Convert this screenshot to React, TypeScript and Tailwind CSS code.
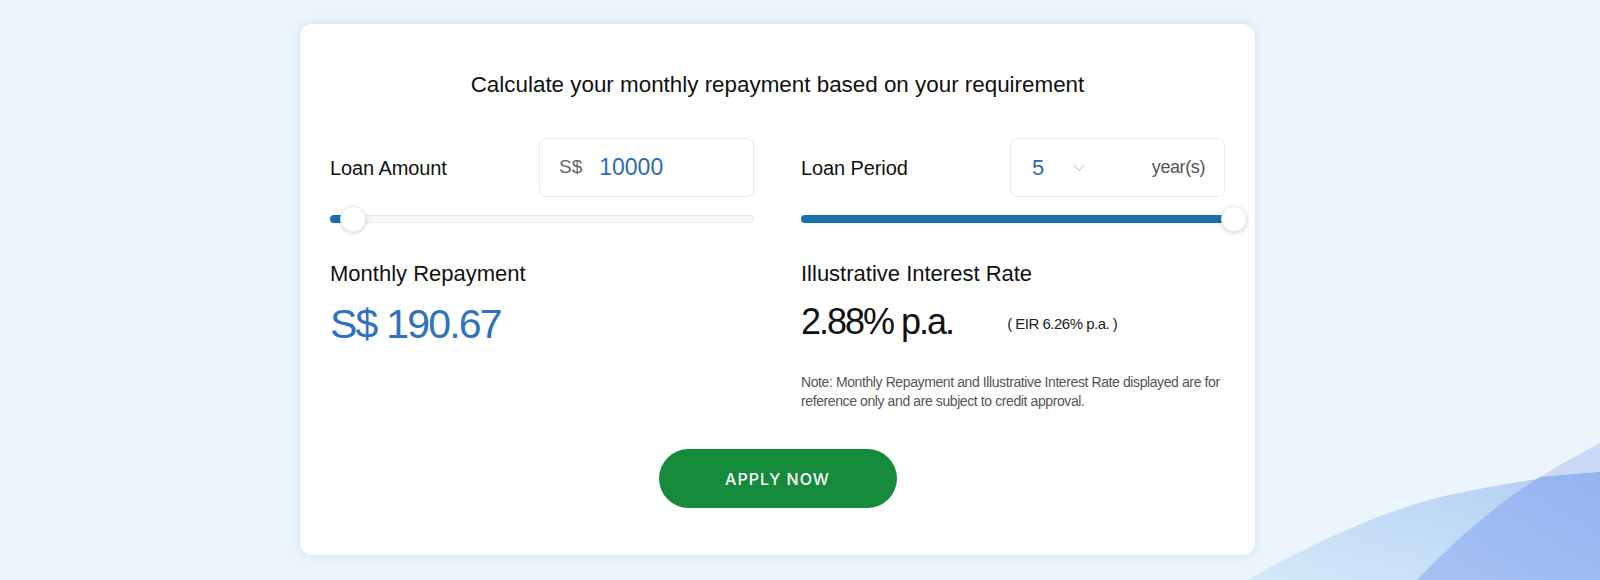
import { ChevronDown } from "lucide-react";

function Slider({ fill, thumbLeft }: { fill: string; thumbLeft: string }) {
  return (
    <div className="relative h-[26px]">
      <div className="absolute left-0 right-0 top-[9px] h-[8px] rounded-full border border-[#e6e8eb] bg-[#f6f7f8]" />
      <div
        className={`absolute left-0 top-[9px] h-[8px] rounded-full bg-[#1a6fae] ${fill}`}
      />
      <div
        className={`absolute top-0 h-[26px] w-[26px] rounded-full border border-[#eceef0] bg-white shadow-[0_1px_4px_rgba(0,0,0,0.18)] ${thumbLeft}`}
      />
    </div>
  );
}

export default function App() {
  return (
    <div className="relative h-[580px] w-full overflow-hidden bg-[#ecf4fc] font-['Liberation_Sans',Arial,sans-serif] text-[#111]">
      <svg
        className="absolute bottom-0 right-0"
        width="360"
        height="180"
        viewBox="0 0 360 180"
      >
        <defs>
          <linearGradient id="w1" x1="0" y1="1" x2="1" y2="0">
            <stop offset="0" stopColor="#d3e9f9" />
            <stop offset="1" stopColor="#b4cdf3" />
          </linearGradient>
          <linearGradient id="w2" x1="0" y1="1" x2="1" y2="0">
            <stop offset="0" stopColor="#a6c2f4" />
            <stop offset="1" stopColor="#95b3f1" />
          </linearGradient>
        </defs>
        <path
          d="M7 180 C 60 150, 130 115, 200 97 C 250 86, 300 77, 360 72 L360 180 Z"
          fill="url(#w1)"
        />
        <path d="M300 77 C 320 64, 340 54, 360 43 L360 72 C 340 73, 320 75, 300 77 Z" fill="#cbd9f6" />
        <path
          d="M177 180 C 215 140, 255 105, 300 77 C 320 75, 340 73, 360 72 L360 180 Z"
          fill="url(#w2)"
        />
      </svg>

      <div className="relative ml-[300px] mt-[24px] w-[955px] rounded-[12px] bg-white px-[30px] pb-[47px] pt-[47px] shadow-[0_0_8px_rgba(120,140,170,0.22)]">
        <h1 className="text-center text-[22.4px] leading-[28px] text-[#111]">
          Calculate your monthly repayment based on your requirement
        </h1>

        <div className="mt-[39px] grid grid-cols-2 gap-x-[47px]">
          {/* Loan amount */}
          <div>
            <div className="flex items-center justify-between">
              <span className="text-[20px] tracking-[-0.1px] text-[#111]">
                Loan Amount
              </span>
              <div className="flex h-[59px] w-[215px] items-center rounded-[7px] border border-[#e8eaed] px-[19px]">
                <span className="text-[19px] text-[#666]">S$</span>
                <span className="ml-[17px] text-[23px] text-[#2b6cb0]">
                  10000
                </span>
              </div>
            </div>
            <div className="mt-[9px]">
              <Slider fill="w-[18px]" thumbLeft="left-[10px]" />
            </div>
            <div className="mt-[28px] text-[22px] leading-[28px]">
              Monthly Repayment
            </div>
            <div className="mt-[12px] text-[41px] leading-[48px] tracking-[-1.8px] text-[#2f72bd]">
              S$ 190.67
            </div>
          </div>

          {/* Loan period */}
          <div>
            <div className="flex items-center justify-between">
              <span className="text-[20px] tracking-[-0.1px] text-[#111]">
                Loan Period
              </span>
              <div className="flex h-[59px] w-[215px] items-center rounded-[7px] border border-[#e8eaed] pl-[21px] pr-[19px]">
                <span className="text-[22px] text-[#2b6cb0]">5</span>
                <ChevronDown
                  className="ml-[26px] text-[#c7ccd2]"
                  size={18}
                  strokeWidth={1.5}
                />
                <span className="ml-auto text-[18px] tracking-[-0.4px] text-[#555]">
                  year(s)
                </span>
              </div>
            </div>
            <div className="mt-[9px]">
              <Slider fill="w-full" thumbLeft="left-[calc(100%-4px)]" />
            </div>
            <div className="mt-[28px] text-[22px] leading-[28px]">
              Illustrative Interest Rate
            </div>
            <div className="mt-[10px] flex items-center">
              <span className="text-[36px] leading-[48px] tracking-[-2px] text-[#111]">
                2.88% p.a.
              </span>
              <span className="ml-[54px] mt-[4px] text-[15px] tracking-[-0.5px] text-[#222]">
                ( EIR 6.26% p.a. )
              </span>
            </div>
            <p className="mt-[27px] text-[14px] leading-[19px] tracking-[-0.4px] text-[#555]">
              Note: Monthly Repayment and Illustrative Interest Rate displayed
              are for reference only and are subject to credit approval.
            </p>
          </div>
        </div>

        <div className="mt-[38px] flex justify-center">
          <button className="h-[59px] w-[238px] rounded-full bg-[#168a3b] font-['Inter',sans-serif] text-[16px] font-medium tracking-[1px] text-white">
            APPLY NOW
          </button>
        </div>
      </div>
    </div>
  );
}
